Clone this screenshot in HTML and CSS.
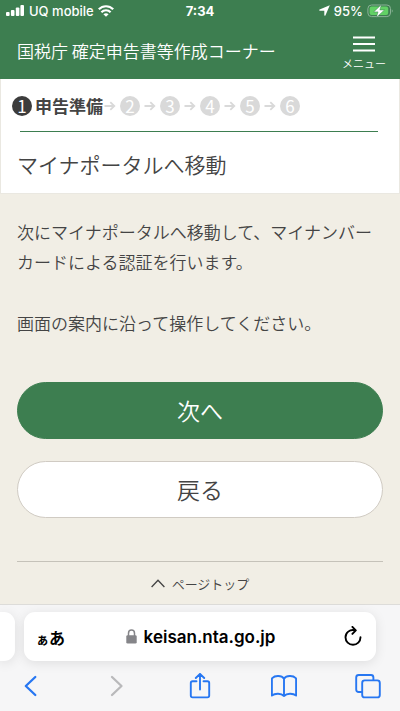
FILE: index.html
```html
<!DOCTYPE html>
<html lang="ja">
<head>
  <meta charset="UTF-8" />
  <title>国税庁 確定申告書等作成コーナー</title>
  <meta name="viewport" content="width=device-width,initial-scale=1" />
  <link rel="stylesheet" href="styles.css">
</head>
<body>
  <header class="header" id="top">
    <div class="status-bar">
      <div class="status-left">
        <svg width="19" height="12" viewBox="0 0 19 12" fill="currentColor" aria-hidden="true">
          <rect x="0" y="7" width="3.6" height="4" rx="1" />
          <rect x="4.9" y="5" width="3.6" height="6" rx="1" />
          <rect x="9.8" y="2.6" width="3.6" height="8.4" rx="1" />
          <rect x="14.4" y="0" width="3.6" height="11" rx="1" />
        </svg>
        <span class="carrier">UQ mobile</span>
        <svg width="16" height="12" viewBox="0 0 16 12" fill="none" stroke="currentColor" stroke-width="2.2" aria-hidden="true">
          <path d="M0.8 4.3C4.8 0.2 11.2 0.2 15.2 4.3" />
          <path d="M3.4 7.2C6 4.6 10 4.6 12.6 7.2" />
          <path d="M8 11.8L5.4 9.2C6.9 7.9 9.1 7.9 10.6 9.2Z" fill="currentColor" stroke="none" />
        </svg>
      </div>
      <span class="clock">7:34</span>
      <div class="status-right">
        <svg width="11" height="11" viewBox="0 0 11 11" fill="currentColor" aria-hidden="true">
          <path d="M10.8 0.2L6.4 10.4C6.2 10.9 5.3 10.8 5.3 10.3V5.8L0.8 5.7C0.1 5.7 0 4.9 0.6 4.6Z" />
        </svg>
        <span class="battery-text">95%</span>
        <svg width="27" height="14" viewBox="0 0 27 14" aria-hidden="true">
          <rect x="0.9" y="1" width="22.6" height="11.6" rx="3.6" fill="none" stroke="#8bb296" stroke-width="1" />
          <rect x="2.6" y="2.6" width="18.6" height="8.4" rx="2" fill="#62d165" />
          <path d="M24.8 5.2C26 5.6 26 8.2 24.8 8.6Z" fill="#8bb296" />
          <path d="M14.4 0.6L6.7 7.9H11L9.4 13.4L17.5 5.9H12.9Z" fill="#fff" stroke="#3d7e50" stroke-width="0.5" />
        </svg>
      </div>
    </div>
    <div class="title-bar">
      <div class="site-title">国税庁 確定申告書等作成コーナー</div>
      <button type="button" class="menu-button">
        <svg width="22" height="16" viewBox="0 0 22 16" stroke="currentColor" stroke-width="2.2" aria-hidden="true">
          <path d="M0 1.5H22M0 8H22M0 14.5H22" />
        </svg>
        メニュー
      </button>
    </div>
  </header>

  <main class="main">
    <section class="panel">
      <ol class="steps">
        <li class="step current"><span class="num">1</span><span class="step-name">申告準備</span></li>
        <li class="step"><svg class="arrow" viewBox="0 0 11 10"><path d="M0 5H9.5M5.8 1.2L9.8 5L5.8 8.8" /></svg><span class="num">2</span></li>
        <li class="step"><svg class="arrow" viewBox="0 0 11 10"><path d="M0 5H9.5M5.8 1.2L9.8 5L5.8 8.8" /></svg><span class="num">3</span></li>
        <li class="step"><svg class="arrow" viewBox="0 0 11 10"><path d="M0 5H9.5M5.8 1.2L9.8 5L5.8 8.8" /></svg><span class="num">4</span></li>
        <li class="step"><svg class="arrow" viewBox="0 0 11 10"><path d="M0 5H9.5M5.8 1.2L9.8 5L5.8 8.8" /></svg><span class="num">5</span></li>
        <li class="step"><svg class="arrow" viewBox="0 0 11 10"><path d="M0 5H9.5M5.8 1.2L9.8 5L5.8 8.8" /></svg><span class="num">6</span></li>
      </ol>
      <h1>マイナポータルへ移動</h1>
    </section>

    <section class="content">
      <p>次にマイナポータルへ移動して、マイナンバーカードによる認証を行います。</p>
      <p>画面の案内に沿って操作してください。</p>
      <div class="actions">
        <button type="button" class="btn btn-primary">次へ</button>
        <button type="button" class="btn">戻る</button>
      </div>
      <a class="page-top" href="#top">
        <svg width="14" height="9" viewBox="0 0 14 9" fill="none" stroke="currentColor" stroke-width="1.3" aria-hidden="true">
          <path d="M0.6 8L7 1.2L13.4 8" />
        </svg>
        ページトップ
      </a>
    </section>
  </main>

  <footer class="browser">
    <div class="tabs">
      <div class="prev-tab"></div>
      <div class="address-bar">
        <button type="button" class="icon-button text-size" aria-label="表示設定"><span class="small">ぁ</span>あ</button>
        <div class="address">
          <svg width="11" height="15" viewBox="0 0 11 15" aria-hidden="true">
            <path d="M2.5 7V4.2C2.5 0 8.5 0 8.5 4.2V7" fill="none" stroke="#858589" stroke-width="1.5" />
            <rect x="0.3" y="6.2" width="10.4" height="8.4" rx="1.4" fill="#858589" />
          </svg>
          keisan.nta.go.jp
        </div>
        <button type="button" class="icon-button" aria-label="再読み込み">
          <svg width="18" height="21" viewBox="0 0 18 21" fill="none" stroke="#000" stroke-width="1.9" stroke-linecap="round" stroke-linejoin="round">
            <path d="M11 4.3C5.6 3.1 1.5 6.7 1.5 11.3C1.5 15.5 4.8 18.8 9 18.8C13.2 18.8 16.5 15.5 16.5 11.3" />
            <path d="M8.4 0.9L11.8 4.4L8.4 7.9" />
          </svg>
        </button>
      </div>
    </div>
    <nav class="toolbar">
      <button type="button" class="icon-button" aria-label="戻る">
        <svg width="26" height="26" viewBox="0 0 26 26"><path d="M16.3 4L6.8 13L16.3 22" stroke-width="2.3" /></svg>
      </button>
      <button type="button" class="icon-button" aria-label="進む" disabled>
        <svg width="26" height="26" viewBox="0 0 26 26"><path d="M9 4L18.5 13L9 22" stroke-width="2.3" /></svg>
      </button>
      <button type="button" class="icon-button" aria-label="共有">
        <svg width="26" height="26" viewBox="0 0 26 26"><path d="M9.5 8.2H5.6Q3.8 8.2 3.8 10V22.6Q3.8 24.4 5.6 24.4H20.4Q22.2 24.4 22.2 22.6V10Q22.2 8.2 20.4 8.2H16.5M13 16.5V0.9M8.8 5L13 0.9L17.2 5" /></svg>
      </button>
      <button type="button" class="icon-button" aria-label="ブックマーク">
        <svg width="26" height="26" viewBox="0 0 26 26"><path d="M13 5.6C10.6 2.3 4 2.3 1.2 5.1Q0.9 5.5 0.9 6.2V22.6C4 20.1 10.2 20.2 13 23C15.8 20.2 22 20.1 25.1 22.6V6.2Q25.1 5.5 24.8 5.1C22 2.3 15.4 2.3 13 5.6ZM13 5.6V23" /></svg>
      </button>
      <button type="button" class="icon-button" aria-label="タブ">
        <svg width="26" height="26" viewBox="0 0 26 26"><path d="M9.7 7.4H22.3Q24.8 7.4 24.8 9.9V21.9Q24.8 24.4 22.3 24.4H9.7Q7.2 24.4 7.2 21.9V9.9Q7.2 7.4 9.7 7.4M7 19H3.7Q1.2 19 1.2 16.5V4.5Q1.2 2 3.7 2H16Q18.4 2 18.4 4.5V7.2" /></svg>
      </button>
    </nav>
  </footer>
</body>
</html>
```
FILE: styles.css
```css
:root {
  --green: #3d7e50;
  --beige: #f1eee5;
  --text: #444;
  --blue: #2777f2;
  --disabled: #d9d9d9;
}
* {
  box-sizing: border-box;
}
body {
  margin: 0;
  min-height: 100vh;
  display: flex;
  flex-direction: column;
  background: var(--beige);
  color: var(--text);
  font-family: 'Noto Sans CJK JP', sans-serif;
  font-weight: 350;
}
button {
  font: inherit;
  cursor: pointer;
}
svg {
  flex: none;
  display: block;
}

/* header */
.header {
  background: var(--green);
  color: #fff;
}
.status-bar {
  display: grid;
  grid-template-columns: 1fr auto 1fr;
  align-items: center;
  height: 21px;
  padding: 0 6px;
  font-family: Inter, sans-serif;
  font-size: 13px;
  font-weight: 500;
}
.status-left, .status-right {
  display: flex;
  align-items: center;
  gap: 4px;
}
.status-right {
  justify-content: flex-end;
}
.clock {
  font-weight: 700;
}
.title-bar {
  display: flex;
  align-items: center;
  justify-content: space-between;
  height: 58px;
  padding: 0 14px 0 17px;
}
.site-title {
  font-size: 17px;
}
.menu-button {
  display: flex;
  flex-direction: column;
  align-items: center;
  gap: 4px;
  padding: 6px 0 0;
  border: none;
  background: none;
  color: #fff;
  font-size: 11px;
  line-height: 14px;
}

/* steps and heading */
.main {
  flex: 1;
}
.panel {
  background: #fff;
  border: 1px solid #eae8e1;
  border-top: none;
  padding: 17px 21px 0 11px;
}
.steps {
  display: flex;
  align-items: center;
  list-style: none;
  margin: 0;
  padding: 0;
}
.step {
  display: flex;
  align-items: center;
}
.num {
  width: 20px;
  height: 20px;
  border-radius: 50%;
  background: var(--disabled);
  color: #fff;
  font-size: 17px;
  font-weight: 400;
  line-height: 20px;
  text-align: center;
}
.current .num {
  background: #3c3c3c;
}
.step-name {
  margin-left: 3px;
  font-size: 17px;
  font-weight: 700;
  line-height: 20px;
}
.arrow {
  width: 12px;
  height: 10px;
  margin: 0 4px;
  fill: none;
  stroke: var(--disabled);
  stroke-width: 1.8;
}
.current + .step .arrow {
  margin-left: 1px;
}
h1 {
  margin: 15px 0 0 8px;
  padding: 17px 0 14px;
  border-top: 1px solid var(--green);
  font-size: 21px;
  font-weight: 350;
  line-height: 30px;
  text-indent: -3px;
}

/* content */
.content {
  padding: 23px 17px 0;
}
p {
  margin: 0 0 31px;
  font-size: 17px;
  line-height: 30px;
}
.actions {
  display: flex;
  flex-direction: column;
  gap: 22px;
  margin-top: 44px;
}
.btn {
  width: 100%;
  height: 57px;
  padding: 0 0 1px;
  border: 1px solid #d0cbc3;
  border-radius: 29px;
  background: #fff;
  color: var(--text);
  font-size: 23px;
}
.btn-primary {
  border-color: var(--green);
  background: var(--green);
  color: #fff;
}
.page-top {
  display: flex;
  align-items: center;
  justify-content: center;
  gap: 7px;
  height: 43px;
  margin-top: 43px;
  border-top: 1px solid #c5c2b9;
  color: var(--text);
  font-size: 13px;
  text-decoration: none;
}

/* browser controls */
.browser {
  border-top: 1px solid #dddcd9;
  background: #f6f6f7;
}
.tabs {
  display: flex;
  gap: 9px;
  padding: 7px 24px 0 0;
}
.prev-tab {
  width: 15px;
  border-radius: 0 11px 11px 0;
  background: #fff;
  box-shadow: 0 2px 12px rgba(0, 0, 0, 0.1);
}
.address-bar {
  flex: 1;
  display: flex;
  align-items: center;
  justify-content: space-between;
  height: 49px;
  padding: 0 14px 0 12px;
  border-radius: 11px;
  background: #fff;
  box-shadow: 0 2px 12px rgba(0, 0, 0, 0.1);
}
.address {
  display: flex;
  align-items: center;
  gap: 7px;
  padding-right: 8px;
  color: #000;
  font-family: Inter, sans-serif;
  font-size: 17px;
  font-weight: 600;
}
.icon-button {
  padding: 0;
  border: none;
  background: none;
  color: var(--blue);
}
.text-size {
  color: #000;
  font-size: 16px;
  font-weight: 700;
}
.small {
  font-size: 13px;
}
.toolbar {
  display: flex;
  align-items: center;
  justify-content: space-between;
  height: 50px;
  padding: 0 19px;
}
.toolbar svg {
  fill: none;
  stroke: currentColor;
  stroke-width: 1.9;
  stroke-linecap: round;
  stroke-linejoin: round;
}
.toolbar .icon-button:disabled {
  color: #b9b9bb;
}
```
